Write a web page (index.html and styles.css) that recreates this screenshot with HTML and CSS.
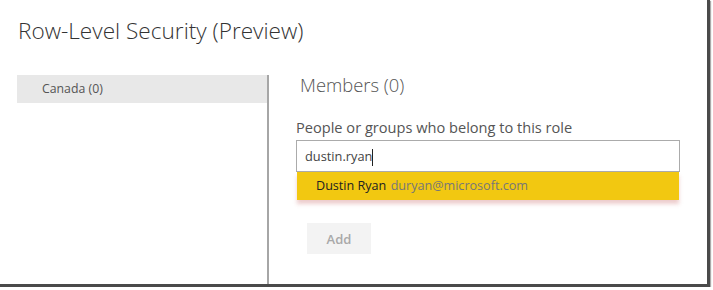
FILE: index.html
```html
<!DOCTYPE html>
<html lang="en">
<head>
    <meta charset="UTF-8">
    <title>Row-Level Security (Preview)</title>
    <link rel="stylesheet" href="styles.css">
</head>
<body>

<div class="window">
    <header>
        <h1>Row-Level Security (Preview)</h1>
    </header>

    <main>
        <aside class="roles">
            <div class="role selected">Canada (0)</div>
        </aside>

        <section class="members">
            <h2>Members (0)</h2>
            <label for="people">People or groups who belong to this role</label>
            <div class="picker">
                <div class="search" id="people">dustin.ryan<span class="caret"></span></div>
                <div class="suggestion">
                    <span class="name">Dustin Ryan</span>
                    <span class="email">duryan@microsoft.com</span>
                </div>
            </div>
            <button disabled>Add</button>
        </section>
    </main>
</div>

</body>
</html>
```

FILE: styles.css
```css
body {
    margin: 0;
    padding: 0;
    background-color: #fff;
    font-family: "Open Sans", "Noto Sans", sans-serif;
    color: #555;
}
.window {
    width: 707px;
    height: 284px;
    border-right: 3px solid #4a4a4a;
    border-bottom: 3px solid #4a4a4a;
    box-shadow: 1px 1px 1px #aaa;
    display: flex;
    flex-direction: column;
    overflow: hidden;
}
header {
    padding: 16px 18px 0;
    height: 59px;
    box-sizing: border-box;
}
h1 {
    margin: 0;
    font-size: 22.6px;
    font-weight: 300;
    color: #333;
    line-height: 30px;
}
main {
    display: flex;
    flex: 1;
    padding-top: 16px;
}
.roles {
    width: 250px;
    margin-left: 17px;
    border-right: 2px solid #a6a6a6;
}
.role {
    height: 28px;
    line-height: 28px;
    padding-left: 25px;
    font-size: 12.3px;
    color: #555;
}
.role.selected {
    background-color: #e8e8e8;
}
.members {
    padding-left: 27px;
    width: 384px;
}
h2 {
    margin: 0;
    padding-left: 4px;
    font-size: 18.4px;
    font-weight: 300;
    color: #555;
    line-height: 20px;
}
label {
    display: block;
    margin-top: 23px;
    font-size: 14.6px;
    line-height: 18px;
    color: #555;
}
.picker {
    margin-top: 4px;
}
.search {
    height: 30px;
    line-height: 30px;
    border: 1px solid #ababab;
    padding-left: 8px;
    font-size: 12.8px;
    color: #444;
}
.caret {
    display: inline-block;
    width: 1px;
    height: 17px;
    background-color: #222;
    vertical-align: middle;
}
.suggestion {
    height: 28px;
    line-height: 28px;
    margin: 0 1px;
    padding-left: 19px;
    background-color: #f2c811;
    font-size: 12.6px;
    box-shadow: 0 4px 4px rgba(210, 130, 130, 0.4);
}
.suggestion .name {
    color: #222;
}
.suggestion .email {
    color: #777;
    margin-left: 1px;
}
button {
    margin: 23px 0 0 11px;
    width: 64px;
    height: 31px;
    border: none;
    background-color: #f3f3f3;
    color: #a9a9a9;
    font-family: inherit;
    font-size: 13px;
    font-weight: 600;
}
```
